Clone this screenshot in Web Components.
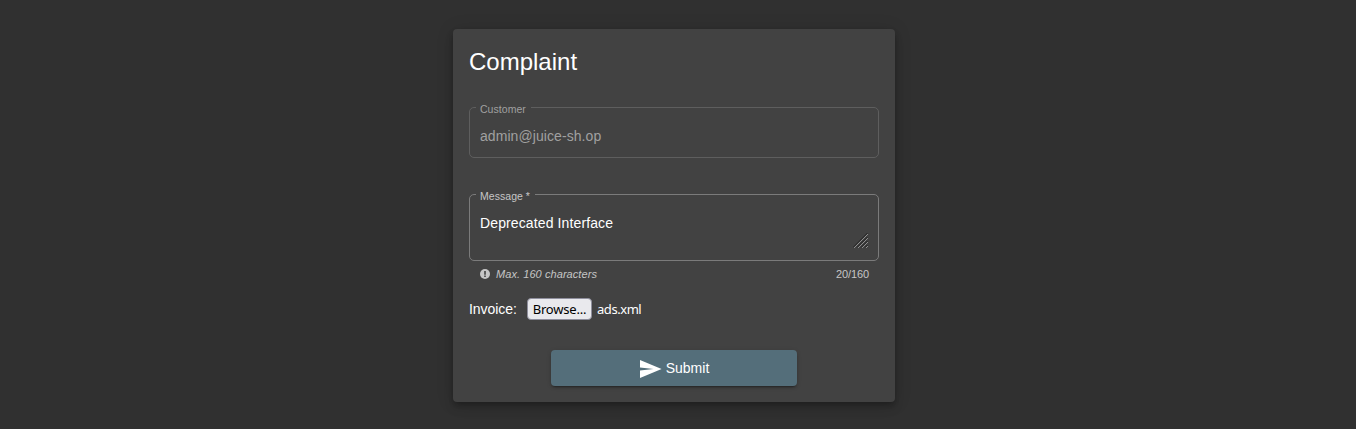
<!DOCTYPE html>
<html lang="en">
<head>
<meta charset="utf-8">
<title>Complaint</title>
<style>
html, body { margin: 0; height: 100%; }
body { background: #303030; color: #fff; font: 14px/20px "Liberation Sans", Arial, sans-serif; overflow: hidden; }
</style>
</head>
<body>
<complaint-card heading="Complaint">
  <outlined-field label="Customer" disabled>admin@juice-sh.op</outlined-field>
  <outlined-field label="Message *" multiline>Deprecated Interface</outlined-field>
  <field-hint count="20/160">Max. 160 characters</field-hint>
  <file-picker label="Invoice:" file="ads.xml">Browse...</file-picker>
  <submit-button>Submit</submit-button>
</complaint-card>
<script>
class BaseElement extends HTMLElement {
  connectedCallback() {
    if (!this.shadowRoot) this.attachShadow({ mode: 'open' }).innerHTML = this.render();
  }
}

customElements.define('complaint-card', class extends BaseElement {
  render() {
    return `<style>
      :host { display: flex; flex-direction: column; box-sizing: border-box; width: 442px; height: 373px;
        margin: 29px 0 0 453px; padding: 16px; border-radius: 4px; background: #424242;
        box-shadow: 0 3px 5px -1px rgba(0,0,0,.2), 0 6px 10px rgba(0,0,0,.14), 0 1px 18px rgba(0,0,0,.12); }
      h1 { margin: 0 0 29px; font-size: 24px; line-height: 33px; font-weight: 400; }
    </style><h1>${this.getAttribute('heading')}</h1><slot></slot>`;
  }
});

customElements.define('outlined-field', class extends BaseElement {
  render() {
    const grip = this.hasAttribute('multiline') ? `<svg width="16" height="16" viewBox="0 0 16 16" fill="none">
      <path d="M0 14.5L14.5 0M4 14.5L14.5 4M8 14.5L14.5 8M12 14.5L14.5 12" stroke="#222" stroke-width="1"/>
      <path d="M1 15L15 1M5 15L15 5M9 15L15 9M13 15L15 13" stroke="#999" stroke-width=".9"/></svg>` : '';
    return `<style>
      :host { display: block; position: relative; box-sizing: border-box; height: 51px; margin-bottom: 36px;
        padding: 18px 10px 0; border: 1px solid #7b7b7b; border-radius: 5px; letter-spacing: .07px; }
      :host([disabled]) { border-color: #5e5e5e; color: #a0a0a0; }
      :host([multiline]) { height: 67px; margin-bottom: 6px; letter-spacing: .12px; }
      .label { position: absolute; left: 6px; top: -6px; padding: 0 5px 0 4px; background: #424242;
        color: #c6c6c6; font-size: 10.5px; line-height: 14px; white-space: nowrap; letter-spacing: 0.04px; }
      :host([disabled]) .label { color: #a0a0a0; }
      svg { position: absolute; right: 9px; bottom: 11px; }
    </style><span class="label">${this.getAttribute('label')}</span><slot></slot>${grip}`;
  }
});

customElements.define('field-hint', class extends BaseElement {
  render() {
    return `<style>
      :host { display: flex; align-items: center; height: 14px; padding: 0 10px 0 11px; margin-bottom: 17px;
        color: #c6c6c6; font-size: 11px; line-height: 14px; }
      svg { margin-right: 6px; }
      em { flex: 1; letter-spacing: .07px; }
      span { letter-spacing: -.1px; }
    </style><svg width="10" height="10" viewBox="0 0 10 10"><circle cx="5" cy="5" r="5" fill="#c6c6c6"/><path d="M4.2 2h1.6v3.7H4.2zM4.2 6.6h1.6v1.3H4.2z" fill="#424242"/></svg>
    <em><slot></slot></em><span>${this.getAttribute('count')}</span>`;
  }
});

customElements.define('file-picker', class extends BaseElement {
  render() {
    return `<style>
      :host { display: flex; align-items: center; height: 22px; margin-bottom: 30px; }
      .label { width: 58px; letter-spacing: -.05px; }
      button { box-sizing: border-box; width: 65px; height: 22px; margin: 0 5px 0 0; padding: 0; border: 1px solid #8f8f9d;
        border-radius: 4px; background: #e9e9ed; color: #000; white-space: nowrap; }
      button, .file { font: 13px/20px "Noto Sans", sans-serif; letter-spacing: -.2px; }
      .file { letter-spacing: -.45px; }
    </style><span class="label">${this.getAttribute('label')}</span><button><slot></slot></button><span class="file">${this.getAttribute('file')}</span>`;
  }
});

customElements.define('submit-button', class extends BaseElement {
  render() {
    return `<style>
      :host { display: block; align-self: center; }
      button { display: flex; align-items: center; justify-content: center; width: 246px; height: 36px; padding: 0; border: 0;
        border-radius: 4px; background: #546e7a; color: #fff; font: inherit;
        box-shadow: 0 3px 1px -2px rgba(0,0,0,.2), 0 2px 2px rgba(0,0,0,.14), 0 1px 5px rgba(0,0,0,.12); }
      svg { margin: 2px 4px 0 -1px; }
    </style><button><svg width="24" height="24" viewBox="0 0 24 24" fill="#fff"><path d="M2 21L23.6 12 2 3v7.6L15.5 12 2 13.4z"/></svg><slot></slot></button>`;
  }
});
</script>
</body>
</html>
